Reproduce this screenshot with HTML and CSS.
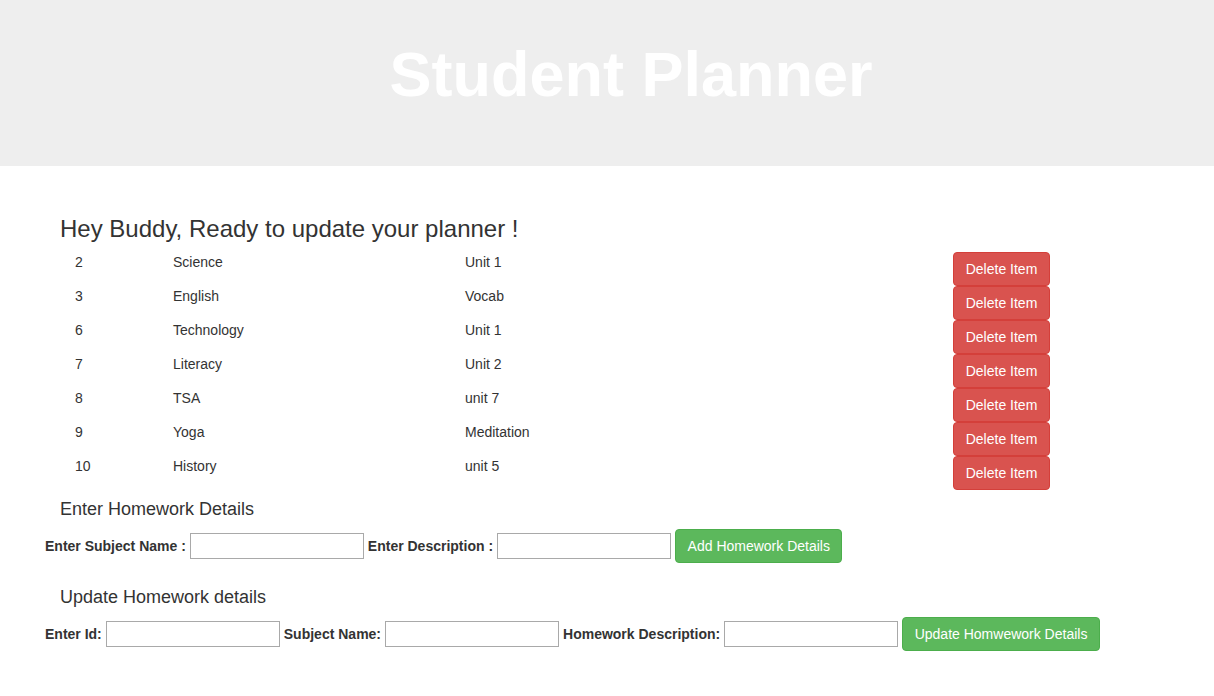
FILE: index.html
```html
<!DOCTYPE html>
<html>
<head>
<meta charset="utf-8">
<title>Student Planner</title>
<link rel="stylesheet" href="styles.css">
</head>
<body>
<header class="jumbotron">
  <h1 class="title">Student Planner</h1>
</header>
<main class="main">
  <h3 class="greeting">Hey Buddy, Ready to update your planner !</h3>
  <div class="list">
    <div class="row"><span class="c-id">2</span><span class="c-sub">Science</span><span class="c-desc">Unit 1</span><button class="btn btn-danger">Delete Item</button></div>
    <div class="row"><span class="c-id">3</span><span class="c-sub">English</span><span class="c-desc">Vocab</span><button class="btn btn-danger">Delete Item</button></div>
    <div class="row"><span class="c-id">6</span><span class="c-sub">Technology</span><span class="c-desc">Unit 1</span><button class="btn btn-danger">Delete Item</button></div>
    <div class="row"><span class="c-id">7</span><span class="c-sub">Literacy</span><span class="c-desc">Unit 2</span><button class="btn btn-danger">Delete Item</button></div>
    <div class="row"><span class="c-id">8</span><span class="c-sub">TSA</span><span class="c-desc">unit 7</span><button class="btn btn-danger">Delete Item</button></div>
    <div class="row"><span class="c-id">9</span><span class="c-sub">Yoga</span><span class="c-desc">Meditation</span><button class="btn btn-danger">Delete Item</button></div>
    <div class="row"><span class="c-id">10</span><span class="c-sub">History</span><span class="c-desc">unit 5</span><button class="btn btn-danger">Delete Item</button></div>
  </div>

  <h4 class="section-title first">Enter Homework Details</h4>
  <form class="form-row">
    <label class="lbl">Enter Subject Name :</label>
    <input class="field" type="text">
    <label class="lbl">Enter Description :</label>
    <input class="field" type="text">
    <button type="button" class="btn btn-success">Add Homework Details</button>
  </form>

  <h4 class="section-title second">Update Homework details</h4>
  <form class="form-row">
    <label class="lbl">Enter Id:</label>
    <input class="field" type="text">
    <label class="lbl">Subject Name:</label>
    <input class="field" type="text">
    <label class="lbl">Homework Description:</label>
    <input class="field" type="text">
    <button type="button" class="btn btn-success">Update Homwework Details</button>
  </form>
</main>
</body>
</html>
```

FILE: styles.css
```css
* { box-sizing: border-box; }

html, body {
  margin: 0;
  padding: 0;
  background: #fff;
  font-family: "Liberation Sans", Arial, Helvetica, sans-serif;
  font-size: 14px;
  line-height: 20px;
  color: #333;
}

.jumbotron {
  background: #eeeeee;
  height: 166px;
  padding-top: 40px;
  padding-left: 48px;
  text-align: center;
}

.title {
  margin: 0;
  font-size: 63px;
  line-height: 69px;
  font-weight: bold;
  color: #ffffff;
}

.main {
  padding: 0 0 0 60px;
}

.greeting {
  margin: 50px 0 10px 0;
  font-size: 24px;
  line-height: 26px;
  font-weight: normal;
  color: #333;
}

.list {
  display: flex;
  flex-direction: column;
}

.row {
  display: grid;
  grid-template-columns: 113px 292px 488px 97px;
  height: 34px;
  align-items: start;
}

.c-id { padding-left: 15px; }

.btn {
  font-family: "Liberation Sans", Arial, sans-serif;
  font-size: 14px;
  line-height: 20px;
  padding: 6px 11.5px;
  border: 1px solid transparent;
  border-radius: 4px;
  color: #fff;
  cursor: pointer;
  white-space: nowrap;
}

.btn-danger {
  background: #d9534f;
  border-color: #d43f3a;
  height: 34px;
  width: 97px;
  padding: 6px 0;
  text-align: center;
}

.btn-success {
  background: #5cb85c;
  border-color: #4cae4c;
  height: 34px;
}

.section-title {
  margin: 0;
  font-size: 18px;
  line-height: 20px;
  font-weight: normal;
  color: #333;
}

.section-title.first { margin-top: 9px; }
.section-title.second { margin-top: 24px; }

.form-row {
  display: flex;
  align-items: center;
  gap: 4px;
  margin: 10px 0 0 -15px;
}

.section-title.second + .form-row { margin-top: 10px; }

.lbl {
  font-weight: bold;
  font-size: 14px;
}

.field {
  width: 174px;
  height: 26px;
  border: 1px solid #a9a9a9;
  padding: 1px 2px;
  font-family: "Liberation Sans", Arial, sans-serif;
  font-size: 13px;
}
```
